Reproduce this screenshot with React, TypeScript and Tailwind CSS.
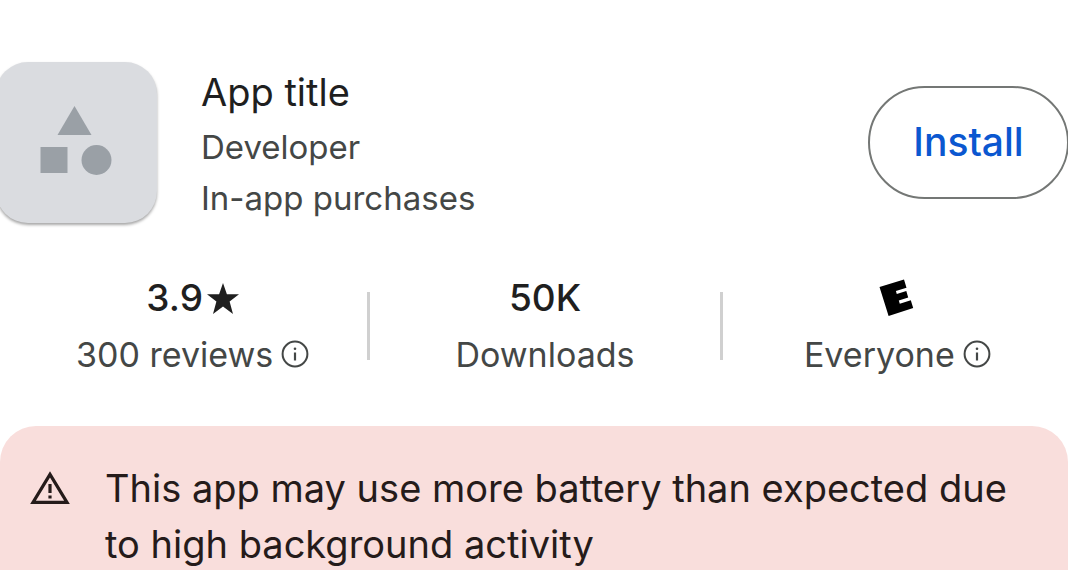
import type { ReactNode } from "react";

function InfoIcon() {
  return (
    <svg viewBox="0 0 28 28" className="size-7 shrink-0" fill="none" aria-hidden="true">
      <circle cx="14" cy="14" r="12.4" stroke="#444746" strokeWidth="2" />
      <path d="M14 12.5v8" stroke="#444746" strokeWidth="2.2" />
      <circle cx="14" cy="8.7" r="1.3" fill="#444746" />
    </svg>
  );
}

function StarIcon() {
  return (
    <svg viewBox="0 0 32 31" className="h-[31px] w-8 shrink-0" aria-hidden="true">
      <path
        d="M16 0l3.9 11.2H32l-9.4 7.4L26 31 16 23.6 6 31l3.4-12.4L0 11.2h12.1z"
        fill="#1f1f1f"
      />
    </svg>
  );
}

function RatingIcon() {
  return (
    <svg viewBox="0 0 36 38" className="h-[38px] w-9" role="img" aria-label="Rated E">
      <path
        d="M0.5 8L25 0.5l2.5 8.2-10.6 3.3 0.9 3 9.5-2.9 1.9 6.5-9.4 2.9 1 3.2 11-3.4 2.4 7.7L9.6 37z"
        fill="#000"
      />
    </svg>
  );
}

function WarningIcon() {
  return (
    <svg viewBox="0 0 40 34" className="h-[34px] w-10 shrink-0" fill="none" aria-hidden="true">
      <path d="M20 3.4L37 31.4H3z" stroke="#251b1a" strokeWidth="3.2" />
      <path d="M20 13v9M20 24.5v3" stroke="#251b1a" strokeWidth="3.2" />
    </svg>
  );
}

function Stat({ value, label }: { value: ReactNode; label: ReactNode }) {
  return (
    <div className="flex flex-1 flex-col items-center">
      <div className="flex h-14 items-center gap-1 text-[37px] font-medium text-[#1f1f1f]">{value}</div>
      <div className="flex h-14 items-center gap-2 text-[34px] text-[#444746]">{label}</div>
    </div>
  );
}

function Divider() {
  return <div className="mt-[22px] h-[68px] w-[3px] shrink-0 bg-[#d0d0d0]" />;
}

export default function App() {
  return (
    <main className="min-h-screen overflow-hidden bg-white pt-[62px] font-['Inter',sans-serif] whitespace-nowrap">
      <header className="flex items-start">
        <div className="-ml-1 flex size-[161px] shrink-0 items-center justify-center rounded-[32px] bg-[#dadce0] pr-0.5 pb-1 shadow-[0_2px_3px_rgba(0,0,0,0.35)]">
          <svg viewBox="0 0 72 70" className="h-[70px] w-[72px]" fill="#9aa0a6" aria-hidden="true">
            <path d="M34.5 0L51.5 29H17.5z" />
            <path d="M0.5 41h27v26h-27z" />
            <circle cx="56.5" cy="54" r="15" />
          </svg>
        </div>
        <div className="ml-11 flex-1">
          <h1 className="text-[38px] leading-[60px] text-[#1f1f1f]">App title</h1>
          <p className="text-[33px] leading-[51px] text-[#444746]">Developer</p>
          <p className="text-[33px] leading-[51px] text-[#444746]">In-app purchases</p>
        </div>
        <button
          type="button"
          className="mt-6 -mr-px h-[113px] w-[201px] rounded-full border-2 border-[#747775] text-[39px] font-medium text-[#0b57d0]"
        >
          Install
        </button>
      </header>

      <section className="mt-[46px] -mr-1 flex pl-[18px]">
        <Stat
          value={
            <>
              3.9
              <StarIcon />
            </>
          }
          label={
            <>
              300 reviews
              <InfoIcon />
            </>
          }
        />
        <Divider />
        <Stat value="50K" label="Downloads" />
        <Divider />
        <Stat
          value={<RatingIcon />}
          label={
            <>
              Everyone
              <InfoIcon />
            </>
          }
        />
      </section>

      <section className="mt-11 flex min-h-36 items-start gap-[35px] rounded-t-[36px] bg-[#f9dedc] pt-[34px] pl-[30px]">
        <div className="flex h-14 items-center">
          <WarningIcon />
        </div>
        <p className="flex-1 text-[38px] leading-14 text-[#251b1a]">
          This app may use more battery than expected due
          <br />
          to high background activity
        </p>
      </section>
    </main>
  );
}
